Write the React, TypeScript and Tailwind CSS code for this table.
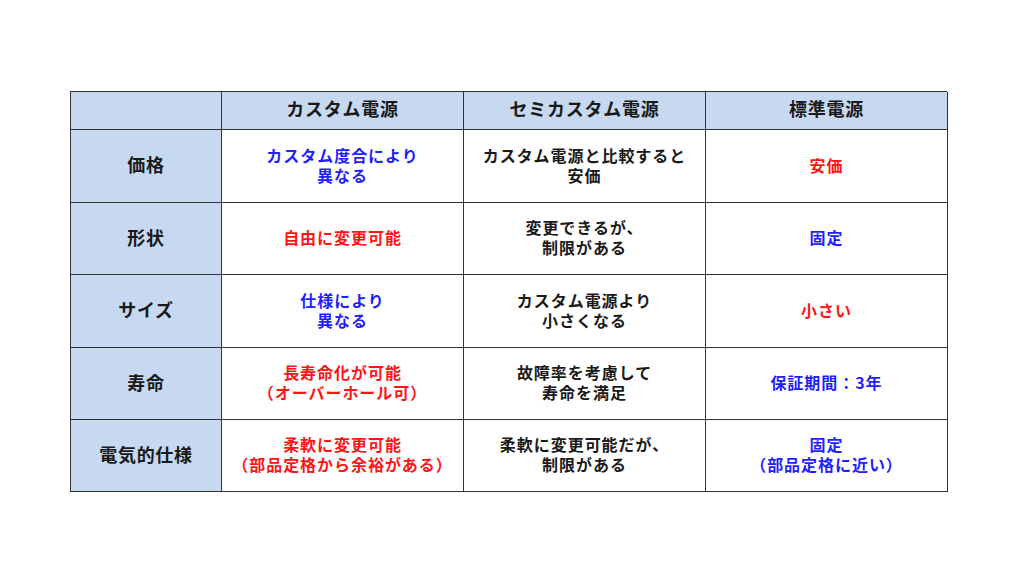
import React from "react";

type Tone = "black" | "blue" | "red";

const toneClass: Record<Tone, string> = {
    black: "text-[#1a1a1a]",
    blue: "text-[#1f1fff]",
    red: "text-[#ff1414]",
};

const headers = ["カスタム電源", "セミカスタム電源", "標準電源"];

const rows: { label: string; cells: { lines: string[]; tone: Tone }[] }[] = [
    {
        label: "価格",
        cells: [
            { lines: ["カスタム度合により", "異なる"], tone: "blue" },
            { lines: ["カスタム電源と比較すると", "安価"], tone: "black" },
            { lines: ["安価"], tone: "red" },
        ],
    },
    {
        label: "形状",
        cells: [
            { lines: ["自由に変更可能"], tone: "red" },
            { lines: ["変更できるが、", "制限がある"], tone: "black" },
            { lines: ["固定"], tone: "blue" },
        ],
    },
    {
        label: "サイズ",
        cells: [
            { lines: ["仕様により", "異なる"], tone: "blue" },
            { lines: ["カスタム電源より", "小さくなる"], tone: "black" },
            { lines: ["小さい"], tone: "red" },
        ],
    },
    {
        label: "寿命",
        cells: [
            { lines: ["長寿命化が可能", "（オーバーホール可）"], tone: "red" },
            { lines: ["故障率を考慮して", "寿命を満足"], tone: "black" },
            { lines: ["保証期間：3年"], tone: "blue" },
        ],
    },
    {
        label: "電気的仕様",
        cells: [
            { lines: ["柔軟に変更可能", "（部品定格から余裕がある）"], tone: "red" },
            { lines: ["柔軟に変更可能だが、", "制限がある"], tone: "black" },
            { lines: ["固定", "（部品定格に近い）"], tone: "blue" },
        ],
    },
];

const cellBase = "flex flex-col items-center justify-center text-center border-r border-b border-[#333333]";

export default function App() {
    return (
        <div
            className="w-[1024px] h-[568px] bg-white pt-[91px] pl-[70px]"
            style={{ fontFamily: '"Noto Sans CJK JP", "Noto Sans", sans-serif' }}
        >
            <div className="grid grid-cols-[151px_242px_242px_242px] grid-rows-[38px_73px_72px_73px_72px_72px] w-[877px] border-l border-t border-[#333333]">
                <div className={`${cellBase} bg-[#c6d9f1]`} />
                {headers.map(h => (
                    <div key={h} className={`${cellBase} bg-[#c6d9f1] pb-[5px] text-[18px] leading-[22px] font-bold text-[#1a1a1a] tracking-[0.04em]`}>
                        {h}
                    </div>
                ))}

                {rows.map(row => (
                    <React.Fragment key={row.label}>
                        <div className={`${cellBase} bg-[#c6d9f1] pb-[4px] text-[18px] leading-[22px] font-bold text-[#1a1a1a] tracking-[0.04em]`}>
                            {row.label}
                        </div>
                        {row.cells.map((cell, i) => (
                            <div key={i} className={`${cellBase} bg-white pb-[3px] text-[16px] leading-[20px] font-bold tracking-[0.06em] ${toneClass[cell.tone]}`}>
                                {cell.lines.map(line => (
                                    <span key={line}>{line}</span>
                                ))}
                            </div>
                        ))}
                    </React.Fragment>
                ))}
            </div>
        </div>
    );
}
